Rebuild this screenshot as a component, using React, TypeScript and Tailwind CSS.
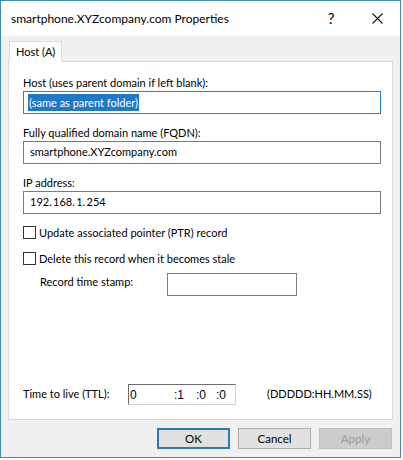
import React from 'react';

const font = "font-['Lato','Noto_Sans',sans-serif]";

const TextBox = ({ value, className = '' }: { value?: React.ReactNode; className?: string }) => (
  <div className={`h-[23px] border border-[#7a7a7a] bg-white flex items-center px-[6px] text-[11px] text-black ${className}`}>
    {value}
  </div>
);

const CheckRow = ({ label }: { label: string }) => (
  <div className="flex items-center h-[13px]">
    <span className="w-[13px] h-[13px] border border-[#333] bg-white" />
    <span className="ml-[3px] text-[11px] text-black leading-none">{label}</span>
  </div>
);

export default function App() {
  return (
    <div className={`w-[403px] h-[460px] bg-white ${font}`}>
      <div className="w-[401px] h-[458px] border border-[#3b8cad] flex flex-col bg-[#f0f0f0]">
        {/* title bar */}
        <div className="h-[35px] bg-white flex items-center pl-[10px] shrink-0">
          <span className="text-[12px] text-black flex-1">smartphone.XYZcompany.com Properties</span>
          <span className="w-[46px] text-center text-[15px] text-black">?</span>
          <span className="w-[46px] flex justify-center">
            <svg width="11" height="11" viewBox="0 0 11 11" stroke="#111" strokeWidth="1.1">
              <path d="M0.5 0.5L10.5 10.5M10.5 0.5L0.5 10.5" />
            </svg>
          </span>
        </div>

        {/* tabs */}
        <div className="px-[7px] pt-[5px] flex flex-col">
          <div className="flex">
            <div className="ml-px h-[21px] px-[6px] bg-white border border-b-0 border-[#d9d9d9] text-[11px] text-black flex items-center relative z-10">
              Host (A)
            </div>
          </div>
          <div className="-mt-px h-[359px] bg-white border border-[#d9d9d9] pl-[14px] pr-[11px] pt-[13px] flex flex-col text-[11px] text-black">
            <div className="leading-[15px]">Host (uses parent domain if left blank):</div>
            <div className="mt-[1px] h-[23px] border border-[#2f7fbf] bg-white flex items-center pl-[4px]">
              <span className="bg-[#1f78c8] text-white px-[1px] leading-[17px]">(same as parent folder)</span>
            </div>

            <div className="mt-[11px] leading-[15px]">Fully qualified domain name (FQDN):</div>
            <TextBox className="mt-[1px]" value="smartphone.XYZcompany.com" />

            <div className="mt-[11px] leading-[15px]">IP address:</div>
            <TextBox className="mt-[1px]" value={'192.\u2009168.\u20091.\u2009254'} />

            <div className="mt-[12px]">
              <CheckRow label="Update associated pointer (PTR) record" />
            </div>
            <div className="mt-[13px]">
              <CheckRow label="Delete this record when it becomes stale" />
            </div>

            <div className="mt-[8px] flex items-start">
              <span className="ml-[17px] w-[127px] leading-[15px] pt-[1px]">Record time stamp:</span>
              <div className="w-[130px] h-[23px] border border-[#7a7a7a] bg-white" />
            </div>

            <div className="mt-[88px] flex items-center">
              <span className="w-[105px]">Time to live (TTL):</span>
              <div className="w-[108px] h-[21px] border-t border-l border-[#6d6d6d] border-r border-b border-r-[#d4d4d4] border-b-[#d4d4d4] bg-white flex items-center font-['Liberation_Sans',sans-serif] text-[12px]">
                <span className="ml-[1px] w-[44px]">0</span>
                <span className="w-[22px]">:1</span>
                <span className="w-[20px]">:0</span>
                <span>:0</span>
              </div>
              <span className="ml-[31px]">(DDDDD:HH.MM.SS)</span>
            </div>
          </div>
        </div>

        {/* buttons */}
        <div className="flex justify-end gap-[8px] pr-[8px] mt-[8px] text-[11.5px]">
          <button className="w-[73px] h-[21px] bg-[#e1e1e1] border-2 border-[#2a7ab5] text-black">OK</button>
          <button className="w-[73px] h-[21px] bg-[#e1e1e1] border border-[#adadad] text-black">Cancel</button>
          <button className="w-[73px] h-[21px] bg-[#cccccc] border border-[#bfbfbf] text-[#9a9a9a]">Apply</button>
        </div>
      </div>
    </div>
  );
}
